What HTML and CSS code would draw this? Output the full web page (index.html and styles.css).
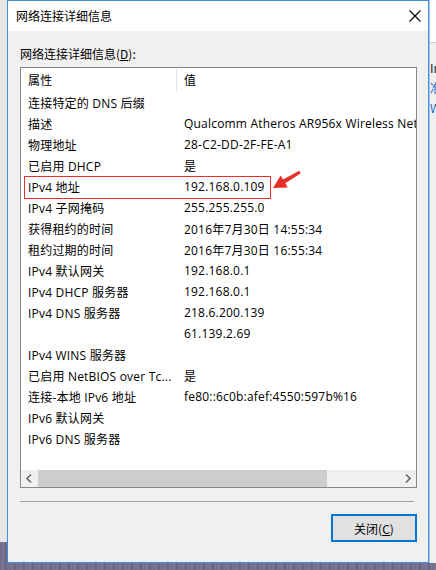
FILE: index.html
```html
<!DOCTYPE html>
<html lang="zh-CN">
<head>
<meta charset="utf-8">
<title>网络连接详细信息</title>
<link rel="stylesheet" href="styles.css">
</head>
<body>
<div class="screen">
  <div class="left-strip"></div>
  <div class="window">
    <div class="titlebar">
      <span class="title">网络连接详细信息</span>
      <svg class="close" width="12" height="12" viewBox="0 0 12 12"><path d="M0.5 0.5 L11.5 11.5 M11.5 0.5 L0.5 11.5" stroke="#000" stroke-width="1.1" fill="none"/></svg>
    </div>
    <div class="body">
      <div class="label">网络连接详细信息(<u>D</u>):</div>
      <div class="listbox">
        <div class="row header"><span class="c1 hc">属性</span><span class="c2">值</span></div>
        <div class="rows">
          <div class="row"><span class="c1">连接特定的 DNS 后缀</span><span class="c2"></span></div>
          <div class="row"><span class="c1">描述</span><span class="c2">Qualcomm Atheros AR956x Wireless Network Adapter</span></div>
          <div class="row"><span class="c1">物理地址</span><span class="c2">28-C2-DD-2F-FE-A1</span></div>
          <div class="row"><span class="c1">已启用 DHCP</span><span class="c2">是</span></div>
          <div class="row marked"><span class="c1">IPv4 地址</span><span class="c2">192.168.0.109</span></div>
          <div class="row"><span class="c1">IPv4 子网掩码</span><span class="c2">255.255.255.0</span></div>
          <div class="row"><span class="c1">获得租约的时间</span><span class="c2">2016年7月30日 14:55:34</span></div>
          <div class="row"><span class="c1">租约过期的时间</span><span class="c2">2016年7月30日 16:55:34</span></div>
          <div class="row"><span class="c1">IPv4 默认网关</span><span class="c2">192.168.0.1</span></div>
          <div class="row"><span class="c1">IPv4 DHCP 服务器</span><span class="c2">192.168.0.1</span></div>
          <div class="row"><span class="c1">IPv4 DNS 服务器</span><span class="c2">218.6.200.139</span></div>
          <div class="row"><span class="c1"></span><span class="c2">61.139.2.69</span></div>
          <div class="row"><span class="c1">IPv4 WINS 服务器</span><span class="c2"></span></div>
          <div class="row"><span class="c1">已启用 NetBIOS over Tc...</span><span class="c2">是</span></div>
          <div class="row"><span class="c1">连接-本地 IPv6 地址</span><span class="c2">fe80::6c0b:afef:4550:597b%16</span></div>
          <div class="row"><span class="c1">IPv6 默认网关</span><span class="c2"></span></div>
          <div class="row"><span class="c1">IPv6 DNS 服务器</span><span class="c2"></span></div>
        </div>
        <div class="hscroll">
          <svg class="arrow" width="17" height="17" viewBox="0 0 17 17"><path d="M10 4.5 L6 8.5 L10 12.5" stroke="#606060" stroke-width="1.5" fill="none"/></svg>
          <div class="track"><div class="thumb"></div></div>
          <svg class="arrow" width="17" height="17" viewBox="0 0 17 17"><path d="M7 4.5 L11 8.5 L7 12.5" stroke="#606060" stroke-width="1.5" fill="none"/></svg>
        </div>
      </div>
      <div class="sep"></div>
      <div class="actions">
        <div class="btn">关闭(<u>C</u>)</div>
      </div>
    </div>
  </div>
  <div class="right-strip">
    <div class="rs-top"></div>
    <div class="rs-text dark">Ir</div>
    <div class="rs-text blue">准</div>
    <div class="rs-text blue">W</div>
  </div>
  <svg class="annot-arrow" width="34" height="26" viewBox="270 166 34 26">
    <polygon points="273,188 287.8,187.4 285.3,183.3 300.8,173.3 299.2,170.7 283.1,179.5 280.6,175.4" fill="#e8302a"/>
  </svg>
</div>
</body>
</html>
```
FILE: styles.css
```css
* { box-sizing: border-box; }
html, body { margin: 0; padding: 0; }
body {
  width: 436px;
  height: 570px;
  overflow: hidden;
  background: #75708b;
  font-family: "Open Sans", "Noto Sans CJK SC", sans-serif;
  font-size: 12px;
  color: #000;
}
.screen {
  position: relative;
  display: flex;
  align-items: flex-start;
  width: 436px;
  height: 570px;
  background: repeating-linear-gradient(90deg, #6f6a86 0, #7d7894 3px, #68637e 6px, #807b96 9px);
}
.left-strip {
  width: 7px;
  height: 542px;
  background: #e6e6e6;
  flex: none;
}
.window {
  width: 422px;
  height: 563px;
  border: 1px solid #3f90dc;
  background: #f0f0f0;
  display: flex;
  flex-direction: column;
  flex: none;
}
.titlebar {
  height: 30px;
  background: #fff;
  display: flex;
  align-items: center;
  justify-content: space-between;
  padding: 0 7px 0 8px;
  flex: none;
}
.title {
  font-family: "Noto Sans CJK SC", sans-serif;
  font-size: 12px;
  line-height: 16px;
}
.close { display: block; }
.body {
  flex: 1;
  padding: 15px 11px 0 12px;
  display: flex;
  flex-direction: column;
}
.label {
  height: 16px;
  line-height: 16px;
  font-family: "Noto Sans CJK SC", sans-serif;
}
.listbox {
  margin-top: 5px;
  height: 421px;
  border: 1px solid #828790;
  background: #fff;
  display: flex;
  flex-direction: column;
  position: relative;
  letter-spacing: 0.2px;
}
.row {
  display: flex;
  height: 21px;
  align-items: center;
  white-space: nowrap;
  position: relative;
}
.row.header { height: 24px; }
.rows { flex: 1; overflow: hidden; }
.c1 {
  width: 156px;
  padding-left: 7px;
  flex: none;
  overflow: hidden;
}
.c2 {
  padding-left: 7px;
  overflow: hidden;
}
.header .c1 {
  height: 23px;
  margin-top: 1px;
  line-height: 23px;
  border-right: 1px solid #e5e5e5;
}
.header .c2 { line-height: 23px; }
.marked::after {
  content: "";
  position: absolute;
  left: 3px;
  top: 0;
  width: 245px;
  height: 21px;
  border: 1px solid #e8302a;
}
.hscroll {
  height: 17px;
  background: #f0f0f0;
  display: flex;
  align-items: stretch;
  flex: none;
}
.arrow { flex: none; display: block; }
.track {
  flex: 1;
  display: flex;
}
.thumb {
  width: 289px;
  background: #cdcdcd;
}
.sep {
  margin-top: 13px;
  height: 1px;
  width: 394px;
  background: #a0a0a0;
}
.actions {
  margin-top: 12px;
  display: flex;
  justify-content: flex-end;
}
.btn {
  width: 86px;
  height: 28px;
  border: 2px solid #0078d7;
  background: #e1e1e1;
  display: flex;
  align-items: center;
  justify-content: center;
  font-family: "Noto Sans CJK SC", sans-serif;
  padding-top: 1px;
}
.right-strip {
  width: 7px;
  height: 563px;
  background: #f0f0f0;
  border-left: 1px solid #a9c8e8;
  overflow: hidden;
  flex: none;
}
.rs-top {
  height: 43px;
  background: #fff;
  border-bottom: 1px solid #d0d0d0;
}
.rs-text {
  height: 20px;
  line-height: 20px;
  font-family: "Noto Sans CJK SC", sans-serif;
  font-size: 12px;
  white-space: nowrap;
}
.rs-text.dark { margin-top: 15px; color: #1a1a1a; }
.rs-text.blue { color: #1e6fd0; }
.annot-arrow {
  position: absolute;
  left: 270px;
  top: 166px;
}
```
